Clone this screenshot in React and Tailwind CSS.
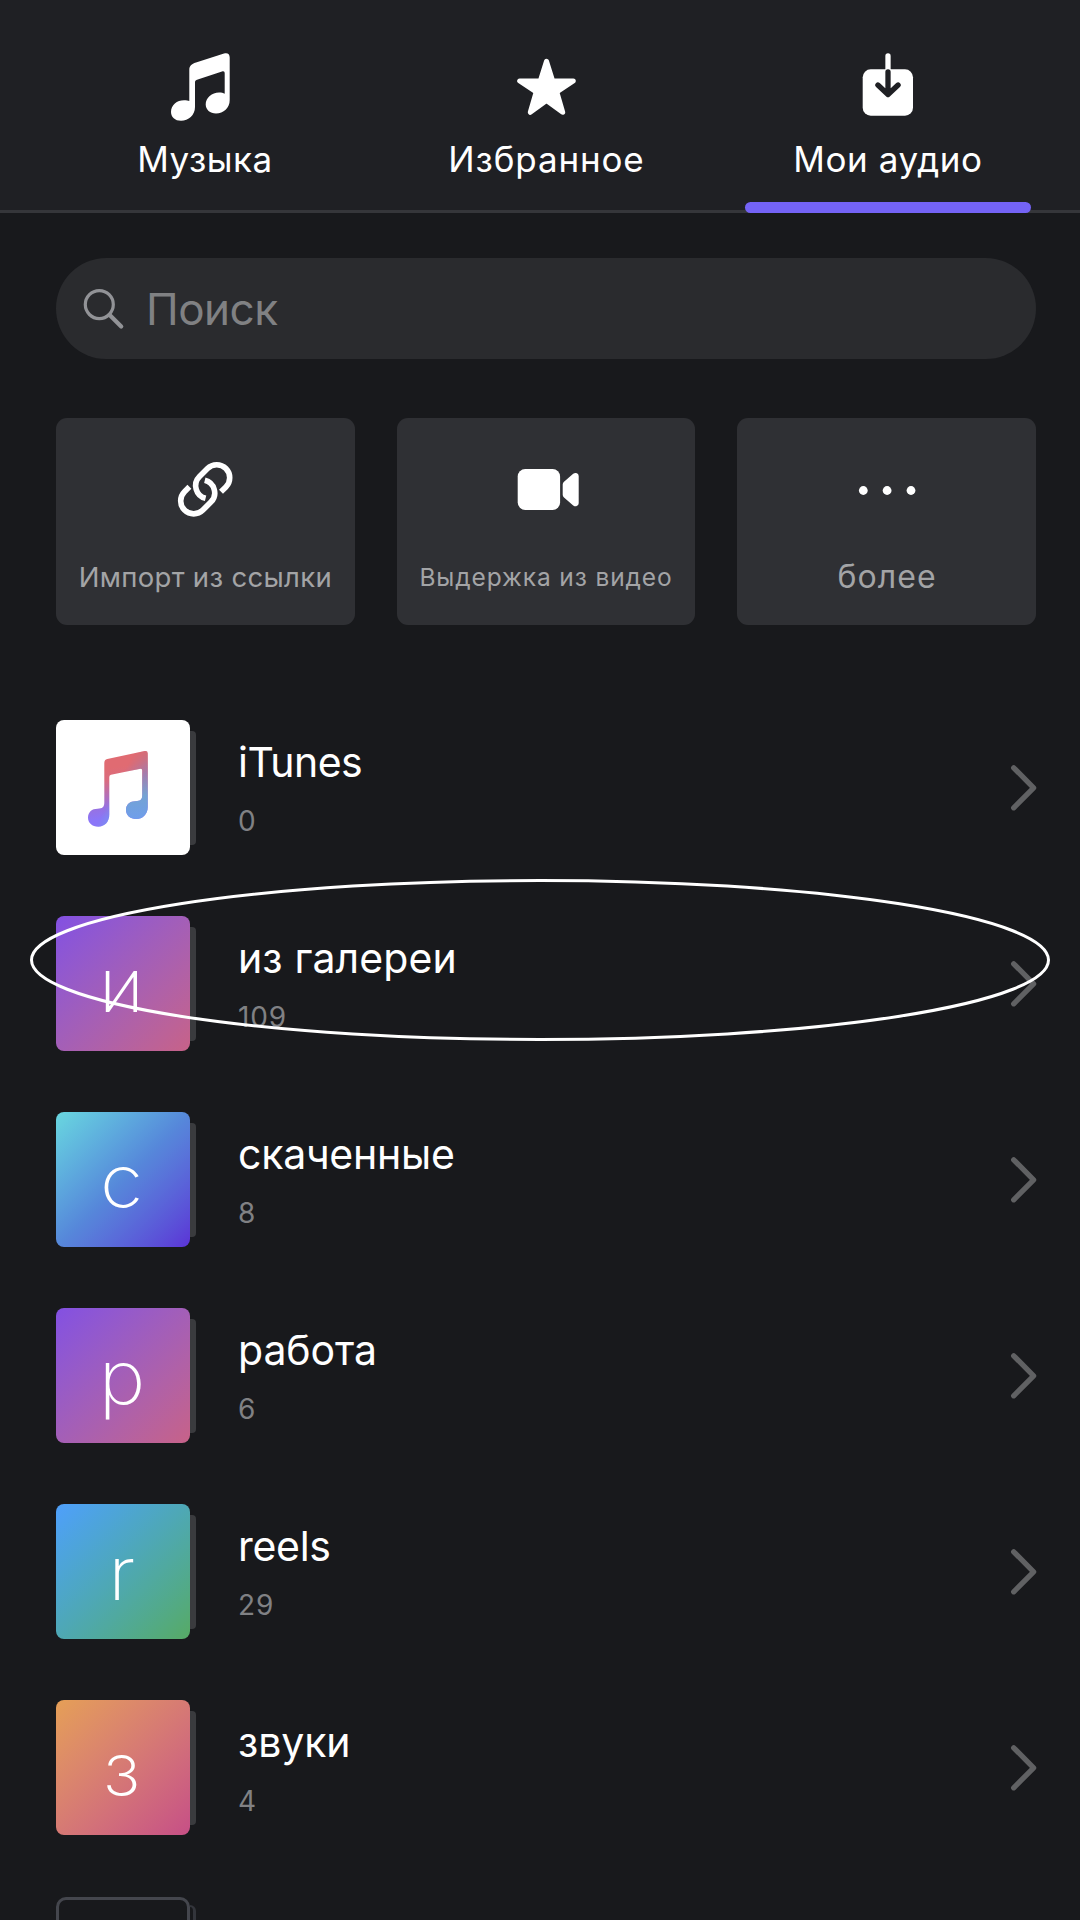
function MusicIcon() {
  return (
    <svg className="size-[72px]" viewBox="0 0 72 72" fill="#fff">
      <path d="M20.3 20 C20.3 16 22.5 13.8 27 12.5 L55 3.6 C58.5 2.6 60.7 4 60.7 7.5 V50 C60.7 58 54.5 63.5 47 63.5 C41 63.5 36.7 59.5 36.7 54.5 C36.7 47.5 43 42.5 50 42.5 C52.5 42.5 54.3 43 55.7 43.7 V23.5 C55.7 21.5 54.8 21 53 21.5 L28 29.8 C26.5 30.3 26 31 26 32.5 V57 C26 65 19.5 70.8 12 70.8 C6 70.8 2 67 2 62 C2 55 8 50.3 15 50.3 C17.5 50.3 19 50.7 20.3 51 Z" />
    </svg>
  );
}

function StarIcon() {
  return (
    <svg className="size-[72px]" viewBox="0 0 72 72">
      <path
        d="M35.5 11.3 L41.7 30.9 H62.3 L45.8 42 L51.7 62.3 L35.5 50.5 L19.3 62.3 L25.2 42 L8.7 30.9 H29.3 Z"
        fill="#fff"
        stroke="#fff"
        strokeWidth="5"
        strokeLinejoin="round"
      />
    </svg>
  );
}

function DownloadIcon() {
  return (
    <svg className="size-[72px]" viewBox="0 0 72 72" fill="none" strokeWidth="5.3" strokeLinecap="round" strokeLinejoin="round">
      <path d="M36 6 V22" stroke="#fff" />
      <rect x="10.7" y="19.3" width="50.3" height="46.4" rx="8" fill="#fff" />
      <path d="M36 21.8 V44.3 M25.9 35 L36 44.5 L46.1 35" stroke="#1f2024" />
    </svg>
  );
}

function LinkIcon() {
  return (
    <svg className="size-[72px]" viewBox="0 0 72 72" fill="none" stroke="#fff" strokeWidth="5.6">
      <path d="M52 37.8 L56.9 32.9 A13 13 0 0 0 38.5 14.5 L30.5 22.5 A13 13 0 0 0 36.6 44.3" />
      <path d="M20.4 32.8 L15.5 37.7 A13 13 0 0 0 33.9 56.1 L41.9 48.1 A13 13 0 0 0 35.8 26.3" />
    </svg>
  );
}

function VideoIcon() {
  return (
    <svg className="size-[72px]" viewBox="0 0 72 72" fill="#fff">
      <rect x="7.7" y="15" width="42.4" height="41" rx="7.5" />
      <path d="M52.7 30.5 Q52.7 28.8 54 27.7 L63.2 19.8 Q64.6 18.7 66.2 19 Q68.7 19.4 68.7 22 V49.3 Q68.7 52 66.2 52.3 Q64.6 52.5 63.2 51.4 L54 43.6 Q52.7 42.5 52.7 40.8 Z" />
    </svg>
  );
}

function DotsIcon() {
  return (
    <svg className="size-[72px]" viewBox="0 0 72 72" fill="#fff">
      <circle cx="12.3" cy="36.5" r="4.4" />
      <circle cx="36.1" cy="36.5" r="4.4" />
      <circle cx="60" cy="36.5" r="4.4" />
    </svg>
  );
}

const NOTE =
  'M48.3 43 Q48.3 39.8 51.3 39.1 L88.7 31.1 Q91.7 30.6 91.7 33.5 V87 C91.7 94.5 86.5 99 80.3 99 C74 99 70 95 70 90 C70 84.5 74 81.2 79.5 81.2 C84.5 81.2 86.3 79.5 86.3 75 V50.5 Q86.3 48.4 84.3 48.8 L55 54.8 Q53.3 55.2 53.3 57 V94.5 C53.3 102 48.5 106.7 42.3 106.7 C36 106.7 32 102.5 32 97.7 C32 92 36 88.7 41.5 88.7 C46.5 88.7 48.3 87 48.3 82.5 Z';

function ItunesNote() {
  return (
    <svg className="h-[135px] w-[134px]" viewBox="0 0 134 135">
      <defs>
        <linearGradient id="noteLeft" gradientUnits="userSpaceOnUse" x1="42" y1="50" x2="50" y2="98">
          <stop offset="0" stopColor="#e06b72" />
          <stop offset="0.25" stopColor="#d96c80" />
          <stop offset="0.8" stopColor="#9672e4" />
          <stop offset="1" stopColor="#8b76f8" />
        </linearGradient>
        <linearGradient id="noteRight" gradientUnits="userSpaceOnUse" x1="0" y1="34" x2="0" y2="98">
          <stop offset="0" stopColor="#c9707f" />
          <stop offset="0.3" stopColor="#a57bac" />
          <stop offset="0.65" stopColor="#74a3d3" />
          <stop offset="1" stopColor="#6f9eea" />
        </linearGradient>
        <linearGradient id="fade" gradientUnits="userSpaceOnUse" x1="69" y1="50" x2="86" y2="59">
          <stop offset="0" stopColor="#000" />
          <stop offset="1" stopColor="#fff" />
        </linearGradient>
        <mask id="rightSide">
          <rect width="134" height="135" fill="url(#fade)" />
        </mask>
      </defs>
      <path d={NOTE} fill="url(#noteLeft)" />
      <path d={NOTE} fill="url(#noteRight)" mask="url(#rightSide)" />
    </svg>
  );
}

const TABS = [
  { label: 'Музыка', Icon: MusicIcon, spacing: 'tracking-[0.5px]' },
  { label: 'Избранное', Icon: StarIcon, spacing: 'tracking-[0.85px]' },
  { label: 'Мои аудио', Icon: DownloadIcon, spacing: 'tracking-[0.6px]', active: true },
];

const ACTIONS = [
  { label: 'Импорт из ссылки', Icon: LinkIcon, text: 'text-[27.5px] tracking-[0.32px]' },
  { label: 'Выдержка из видео', Icon: VideoIcon, text: 'text-[24.5px] tracking-[0.88px]' },
  { label: 'более', Icon: DotsIcon, text: 'text-[32px] tracking-[1.1px] pl-px' },
];

const FOLDERS = [
  { name: 'iTunes', count: 0, tile: 'bg-white', spacing: 'tracking-[-0.55px]' },
  { name: 'из галереи', count: 109, letter: 'и', tile: 'bg-linear-135 from-[#8350e2] to-[#c76288]', spacing: 'tracking-[0.12px]', marked: true },
  { name: 'скаченные', count: 8, letter: 'с', tile: 'bg-linear-135 from-[#69d7df] via-[#5688da] to-[#5b32d6]', spacing: 'tracking-[-0.25px]' },
  { name: 'работа', count: 6, letter: 'р', tile: 'bg-linear-135 from-[#8350e2] to-[#c76288]', spacing: 'tracking-[-0.1px]' },
  { name: 'reels', count: 29, letter: 'r', tile: 'bg-linear-135 from-[#4f9ffb] to-[#57aa64]', spacing: 'tracking-[-0.3px]' },
  { name: 'звуки', count: 4, letter: 'з', tile: 'bg-linear-135 from-[#e59f56] to-[#c64f86]', spacing: 'tracking-[-0.1px]' },
];

function FolderRow({ name, count, letter, tile, spacing, marked }) {
  return (
    <div className="relative flex h-[135px] shrink-0">
      <div className={`flex h-[135px] w-[134px] justify-center overflow-hidden rounded-[8px] ${tile}`}>
        {letter ? <span className="scale-x-105 pr-[2px] text-[75px] leading-[137px] font-extralight">{letter}</span> : <ItunesNote />}
      </div>
      <div className="mt-[10.5px] h-[114px] w-[6px] rounded-r-[4px] bg-[#3a3b3e]" />
      <div className="ml-[42px] flex-1 pt-[14px]">
        <div className={`text-[41px] leading-[56px] ${spacing}`}>{name}</div>
        <div className="mt-[13px] text-[28px] leading-[37px] tracking-[0.8px] text-[#808184]">{count}</div>
      </div>
      <svg className="h-12 w-[30px] self-center" viewBox="0 0 30 48" fill="none">
        <path d="M3.7 3.8 L23.6 23.8 L3.7 43.8" stroke="#606163" strokeWidth="5.3" strokeLinecap="round" strokeLinejoin="round" />
      </svg>
      {marked && (
        <svg className="absolute -top-[37px] -left-[26px] h-[162px] w-[1020px]" viewBox="0 0 1020 162" fill="none">
          <ellipse cx="510" cy="81" rx="508.5" ry="79.5" stroke="#fff" strokeWidth="3" />
        </svg>
      )}
    </div>
  );
}

export default function App() {
  return (
    <div className="flex h-[1920px] w-[1080px] flex-col overflow-hidden bg-[#18191c] font-['Inter',sans-serif] text-white">
      <header className="flex h-[213px] shrink-0 gap-[55.5px] border-b-[3px] border-[#35363a] bg-[#1f2024] pl-[62px]">
        {TABS.map(({ label, Icon, spacing, active }) => (
          <div key={label} className="flex h-[213px] w-[286px] shrink-0 flex-col items-center pt-[50px]">
            <Icon />
            <span className={`mt-[13px] text-[35px] leading-[48px] whitespace-nowrap ${spacing}`}>{label}</span>
            {active && <div className="mt-auto h-[11px] w-full rounded-full bg-[#7463f5]" />}
          </div>
        ))}
      </header>

      <div className="mt-[45px] mr-[44px] ml-[56px] flex h-[101px] shrink-0 items-center rounded-full bg-[#2a2b2e] pl-[26px]">
        <svg className="size-[44px]" viewBox="0 0 44 44" fill="none" stroke="#929397">
          <circle cx="17.3" cy="17.6" r="14" strokeWidth="3.2" />
          <path d="M27.7 28 L39.2 39.5" strokeWidth="4.2" strokeLinecap="round" />
        </svg>
        <span className="ml-[20px] text-[44px] leading-[66px] tracking-[-0.5px] text-[#808183]">Поиск</span>
      </div>

      <div className="mt-[59px] mr-[44px] ml-[56px] grid h-[207px] shrink-0 grid-cols-3 gap-[42px]">
        {ACTIONS.map(({ label, Icon, text }) => (
          <div key={label} className="flex flex-col items-center rounded-[11px] bg-[#2f3034] pt-[36px]">
            <Icon />
            <span className={`mt-[21px] leading-[60px] whitespace-nowrap text-[#a3a4a6] ${text}`}>{label}</span>
          </div>
        ))}
      </div>

      <div className="mt-[95px] flex flex-col gap-[61px] pr-[40px] pl-[56px]">
        {FOLDERS.map((folder) => (
          <FolderRow key={folder.name} {...folder} />
        ))}
        <div className="flex h-[135px] shrink-0 pt-px">
          <div className="h-[134px] w-[134px] rounded-[10px] border-3 border-[#44464d]" />
          <div className="mt-[8px] h-[114px] w-[6px] rounded-tr-[6px] border-t-2 border-r-3 border-[#33353b]" />
        </div>
      </div>
    </div>
  );
}
